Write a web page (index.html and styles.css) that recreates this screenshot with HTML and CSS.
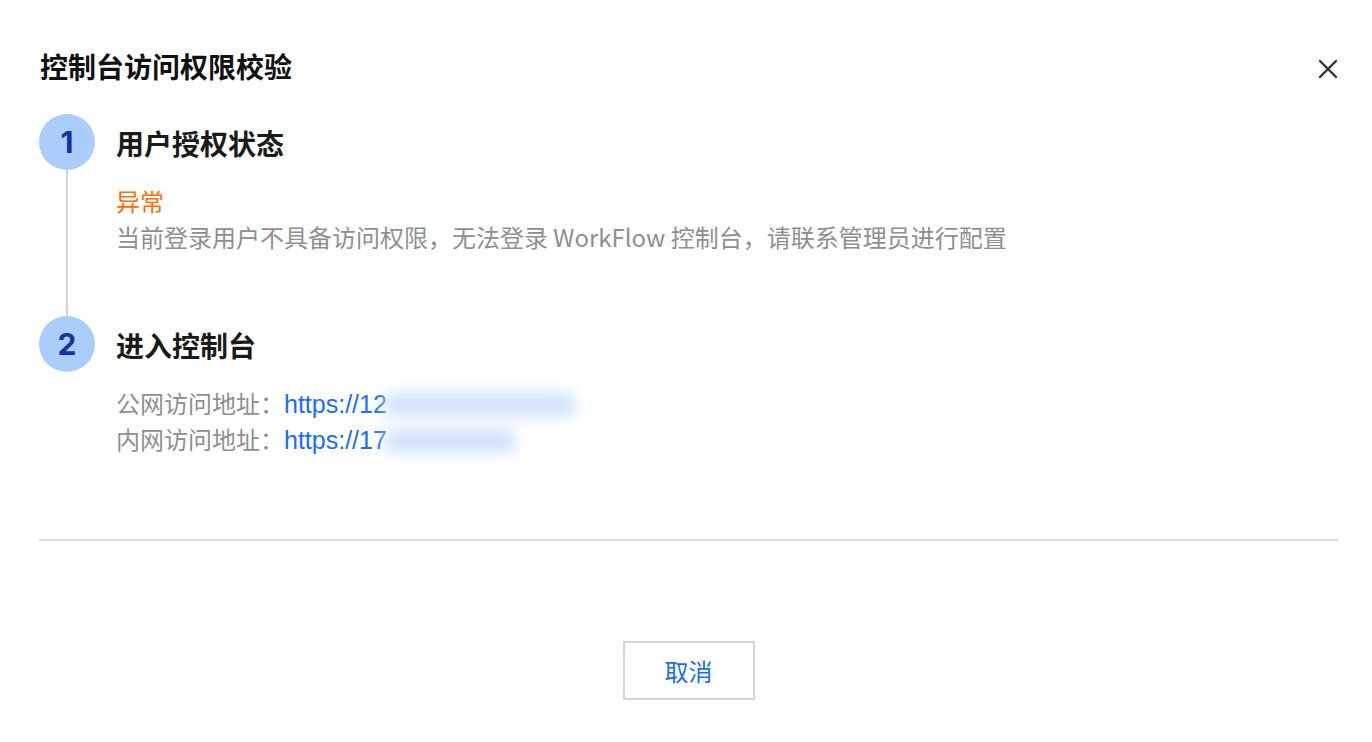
FILE: index.html
```html
<!DOCTYPE html>
<html>
<head>
    <title>控制台访问权限校验</title>
    <link rel="stylesheet" href="styles.css">
</head>
<body>
    <section class="dialog">

        <div class="dialog-header">
            <h1>控制台访问权限校验</h1>
            <button type="button" class="close-btn" aria-label="关闭">
                <svg width="20" height="20" viewBox="0 0 20 20">
                    <path d="M2 2 L18 18 M18 2 L2 18" stroke="#333333" stroke-width="2.4" stroke-linecap="round" fill="none"/>
                </svg>
            </button>
        </div>

        <div class="steps">

            <div class="step">
                <div class="step-rail">
                    <div class="step-num">1</div>
                    <div class="step-line"></div>
                </div>
                <div class="step-body">
                    <h2>用户授权状态</h2>
                    <div class="step-content">
                        <div class="status-error">异常</div>
                        <div class="step-desc">当前登录用户不具备访问权限，无法登录 WorkFlow 控制台，请联系管理员进行配置</div>
                    </div>
                </div>
            </div>

            <div class="step">
                <div class="step-rail">
                    <div class="step-num">2</div>
                </div>
                <div class="step-body">
                    <h2>进入控制台</h2>
                    <div class="step-content">
                        <div class="step-desc">公网访问地址：<a href="#" class="addr">https://12<span class="blur blur-long"></span></a></div>
                        <div class="step-desc">内网访问地址：<a href="#" class="addr">https://17<span class="blur blur-short"></span></a></div>
                    </div>
                </div>
            </div>

        </div>

        <div class="dialog-footer">
            <button type="button" class="cancel-btn">取消</button>
        </div>

    </section>
</body>
</html>
```

FILE: styles.css
```css
body {
    margin: 0;
    background-color: #FFFFFF;
    font-family: "PingFang SC", "Noto Sans CJK SC", "Noto Sans", sans-serif;
    color: #1a1a1a;
}

.dialog {
    padding: 46px 34px 0 39px;
}

.dialog-header {
    display: flex;
    align-items: center;
    justify-content: space-between;
    height: 40px;
}

.dialog-header h1 {
    margin: 0 0 0 1px;
    font-size: 28px;
    line-height: 40px;
    font-weight: 700;
    color: #111111;
}

.close-btn {
    border: none;
    background: none;
    padding: 0;
    margin: 6px 0 0 0;
    width: 20px;
    height: 20px;
    cursor: pointer;
}

.steps {
    display: flex;
    flex-direction: column;
    margin-top: 28px;
}

.step {
    display: grid;
    grid-template-columns: 56px 1fr;
    column-gap: 21px;
}

.step-rail {
    display: flex;
    flex-direction: column;
    align-items: center;
}

.step-num {
    width: 56px;
    height: 56px;
    border-radius: 50%;
    background-color: #abcdfc;
    color: #15339a;
    font-family: "Inter", "Noto Sans", sans-serif;
    font-size: 30px;
    font-weight: 700;
    line-height: 56px;
    text-align: center;
    flex-shrink: 0;
}

.step-line {
    flex: 1;
    width: 2px;
    background-color: #cdd4e0;
}

.step-body h2 {
    margin: 0;
    height: 56px;
    font-size: 28px;
    line-height: 58px;
    font-weight: 700;
    color: #1a1a1a;
}

.step-content {
    margin-top: 13px;
}

.step:first-child .step-body {
    padding-bottom: 61px;
}

.status-error {
    font-size: 24px;
    line-height: 36px;
    color: #ff6c00;
}

.step-desc {
    font-size: 24px;
    line-height: 36px;
    height: 36px;
    color: #8f8f8f;
    white-space: nowrap;
}

.addr {
    color: #1a6cff;
    text-decoration: none;
    font-family: "Liberation Sans", "Noto Sans", sans-serif;
    font-size: 25px;
}

.blur {
    display: inline-block;
    height: 24px;
    margin-left: -2px;
    vertical-align: -4px;
    background-color: #d3e3fd;
    filter: blur(7px);
}

.blur-long {
    width: 190px;
}

.blur-short {
    width: 130px;
}

.dialog-footer {
    border-top: 2px solid #dedede;
    margin-top: 82px;
    padding-top: 100px;
    display: flex;
    justify-content: center;
}

.cancel-btn {
    width: 132px;
    height: 59px;
    border: 2px solid #cfd5de;
    background-color: #FFFFFF;
    color: #1a6cff;
    font-family: "PingFang SC", "Noto Sans CJK SC", sans-serif;
    font-size: 24px;
    cursor: pointer;
}
```
